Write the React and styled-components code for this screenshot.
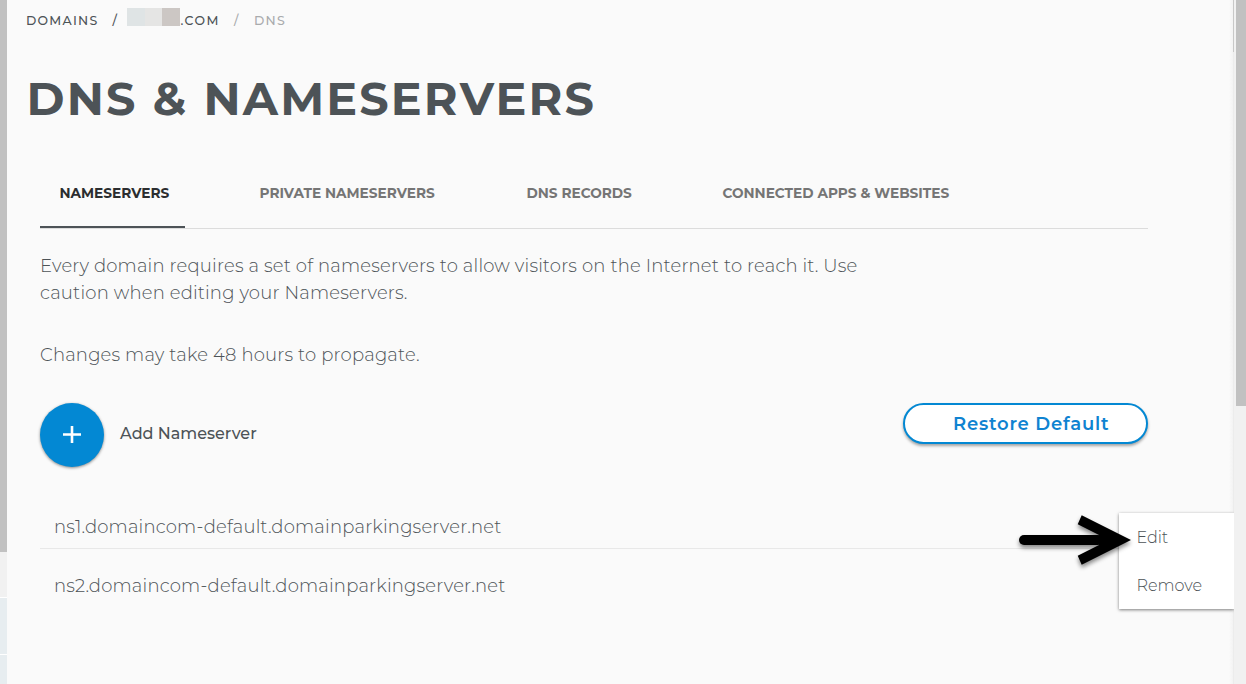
import React, { useState } from "react";
import styled, { createGlobalStyle } from "styled-components";

const tabs = [
  { label: "Nameservers", width: 145 },
  { label: "Private Nameservers", width: 212 },
  { label: "DNS Records", width: 141 },
  { label: "Connected Apps & Websites", width: 264 },
];

const nameservers = [
  "ns1.domaincom-default.domainparkingserver.net",
  "ns2.domaincom-default.domainparkingserver.net",
];

const App = () => {
  const [active, setActive] = useState("Nameservers");

  return (
    <>
      <GlobalStyle />
      <Page>
        <Rail>
          <RailThumb />
          <RailTrack />
          <RailBlock />
          <RailBlock />
        </Rail>
        <Main>
          <Breadcrumb>
            <Crumb $width={86.5}>Domains</Crumb>
            <Crumb $width={14.5}>/</Crumb>
            <Redacted>
              <span />
              <span />
              <span />
            </Redacted>
            <Crumb $width={53.5} $spacing={1.5}>
              .com
            </Crumb>
            <Crumb $width={20} $muted>
              /
            </Crumb>
            <Crumb $muted>DNS</Crumb>
          </Breadcrumb>
          <Title>DNS &amp; Nameservers</Title>
          <Content>
            <Tabs>
              {tabs.map((tab) => (
                <Tab
                  key={tab.label}
                  $width={tab.width}
                  $active={tab.label === active}
                  onClick={() => setActive(tab.label)}
                >
                  {tab.label}
                </Tab>
              ))}
            </Tabs>
            <Text>
              Every domain requires a set of nameservers to allow visitors on
              the Internet to reach it. Use caution when editing your
              Nameservers.
            </Text>
            <Text>Changes may take 48 hours to propagate.</Text>
            <Actions>
              <AddButton aria-label="Add Nameserver">
                <svg width="18" height="18" viewBox="0 0 18 18">
                  <path d="M9 0v17M0 8.5h18" stroke="#fff" strokeWidth="2.6" />
                </svg>
              </AddButton>
              <AddLabel>Add Nameserver</AddLabel>
              <RestoreButton>Restore Default</RestoreButton>
            </Actions>
            <List>
              {nameservers.map((name) => (
                <Row key={name}>{name}</Row>
              ))}
            </List>
          </Content>
          <Menu>
            <MenuItem>Edit</MenuItem>
            <MenuItem>Remove</MenuItem>
          </Menu>
          <Arrow viewBox="0 0 130 70">
            <path
              d="M16 35H90"
              stroke="#000"
              strokeWidth="10"
              strokeLinecap="round"
            />
            <path d="M123 35 73.7 10.3 69.7 19.3 91 30V40L69.7 50.7 73.7 59.7Z" />
          </Arrow>
        </Main>
        <Edge />
        <Scrollbar>
          <ScrollThumb />
        </Scrollbar>
      </Page>
    </>
  );
};

const GlobalStyle = createGlobalStyle`
  * {
    box-sizing: border-box;
  }
  body {
    margin: 0;
    overflow: hidden;
    background: #fafafa;
    color: #4d5357;
    font-family: Montserrat, Inter, sans-serif;
  }
  button {
    font-family: inherit;
    cursor: pointer;
  }
`;

const Page = styled.div`
  display: flex;
  width: 1246px;
  height: 684px;
  overflow: hidden;
`;

const Rail = styled.div`
  display: flex;
  flex-direction: column;
  width: 7px;
  background: #fff;
`;

const RailThumb = styled.div`
  flex-shrink: 0;
  height: 552px;
  background: #c1c1c1;
`;

const RailTrack = styled.div`
  flex-shrink: 0;
  height: 45px;
  background: #f1f1f1;
`;

const RailBlock = styled.div`
  flex-shrink: 0;
  height: 56px;
  margin-top: 1px;
  background: #e7edf0;
`;

const Main = styled.main`
  position: relative;
  flex: 1;
  padding-top: 8px;
  background: linear-gradient(to left, #f3f3f3, #fafafa 4px);
`;

const Breadcrumb = styled.nav`
  display: flex;
  height: 25px;
  padding-left: 19px;
  font-size: 12.5px;
  font-weight: 500;
  line-height: 25px;
  text-transform: uppercase;
`;

const Crumb = styled.span`
  width: ${({ $width }) => ($width ? `${$width}px` : "auto")};
  letter-spacing: ${({ $spacing = 1.25 }) => $spacing}px;
  color: ${({ $muted }) => ($muted ? "#a9abad" : "#4d5357")};
`;

const Redacted = styled.span`
  display: flex;
  width: 53px;
  height: 18px;
  margin-right: 0.5px;
  span {
    flex: 1;
    background: #dfe4e5;
  }
  span:nth-child(2) {
    background: #e5e5e4;
  }
  span:nth-child(3) {
    background: #ccc7c4;
  }
`;

const Title = styled.h1`
  margin: 38px 0 33px 19.5px;
  font-size: 46px;
  font-weight: 700;
  line-height: 56px;
  letter-spacing: 2.15px;
  text-transform: uppercase;
  white-space: nowrap;
`;

const Content = styled.section`
  width: 1108px;
  margin-left: 33px;
`;

const Tabs = styled.div`
  display: flex;
  gap: 55px;
  height: 69px;
  border-bottom: 1px solid #dcdcdc;
`;

const Tab = styled.button`
  width: ${({ $width }) => $width}px;
  padding: 0 0 0 19.5px;
  border: none;
  border-bottom: 2px solid
    ${({ $active }) => ($active ? "#4d5357" : "transparent")};
  background: none;
  color: ${({ $active }) => ($active ? "#2b2d2f" : "#757575")};
  font-size: 13.7px;
  font-weight: 700;
  text-align: left;
  text-transform: uppercase;
  white-space: nowrap;
`;

const Text = styled.p`
  width: 831px;
  margin: 23px 0 34px;
  padding-top: 1px;
  font-size: 18px;
  font-weight: 300;
  line-height: 27px;
  letter-spacing: 0.18px;
`;

const Actions = styled.div`
  display: flex;
  height: 64px;
`;

const AddButton = styled.button`
  display: flex;
  align-items: center;
  justify-content: center;
  width: 64px;
  height: 64px;
  padding: 0;
  border: none;
  border-radius: 50%;
  background: #0388d3;
  box-shadow: 0 1px 3px rgba(0, 0, 0, 0.45);
`;

const AddLabel = styled.span`
  margin-left: 16px;
  font-size: 16px;
  font-weight: 500;
  line-height: 61px;
`;

const RestoreButton = styled.button`
  width: 245px;
  height: 41px;
  margin-left: auto;
  padding: 0 0 0 48px;
  border: 2px solid #0388d3;
  border-radius: 21px;
  background: #fff;
  box-shadow: 0 2px 3px rgba(0, 0, 0, 0.35);
  color: #0f83d1;
  font-size: 18px;
  font-weight: 600;
  letter-spacing: 0.78px;
  text-align: left;
  white-space: nowrap;
`;

const List = styled.div`
  padding-top: 23px;
`;

const Row = styled.div`
  height: 59px;
  padding: 23px 0 0 14px;
  border-bottom: 1px solid #e8e8e8;
  font-size: 18px;
  font-weight: 300;
  line-height: 28px;
  letter-spacing: 0.18px;
  &:last-child {
    border-bottom: none;
  }
`;

const Menu = styled.div`
  position: absolute;
  top: 513px;
  right: -1px;
  z-index: 1;
  width: 115px;
  background: #fff;
  box-shadow: 0 1px 3px rgba(0, 0, 0, 0.5);
  clip-path: inset(-4px 0 -6px -6px);
`;

const MenuItem = styled.div`
  height: 48px;
  padding-left: 17.5px;
  font-size: 16px;
  font-weight: 300;
  line-height: 49px;
`;

const Arrow = styled.svg`
  position: absolute;
  top: 505px;
  left: 1001px;
  z-index: 2;
  width: 130px;
  height: 70px;
  filter: drop-shadow(0 3px 2px rgba(0, 0, 0, 0.45));
`;

const Edge = styled.div`
  width: 1px;
  height: 684px;
  background: linear-gradient(#c8c8c8 52px, #ececec 52px);
`;

const Scrollbar = styled.div`
  width: 12px;
  padding-left: 2px;
  background: #f1f1f1;
`;

const ScrollThumb = styled.div`
  height: 406px;
  background: #c1c1c1;
`;

export default App;
